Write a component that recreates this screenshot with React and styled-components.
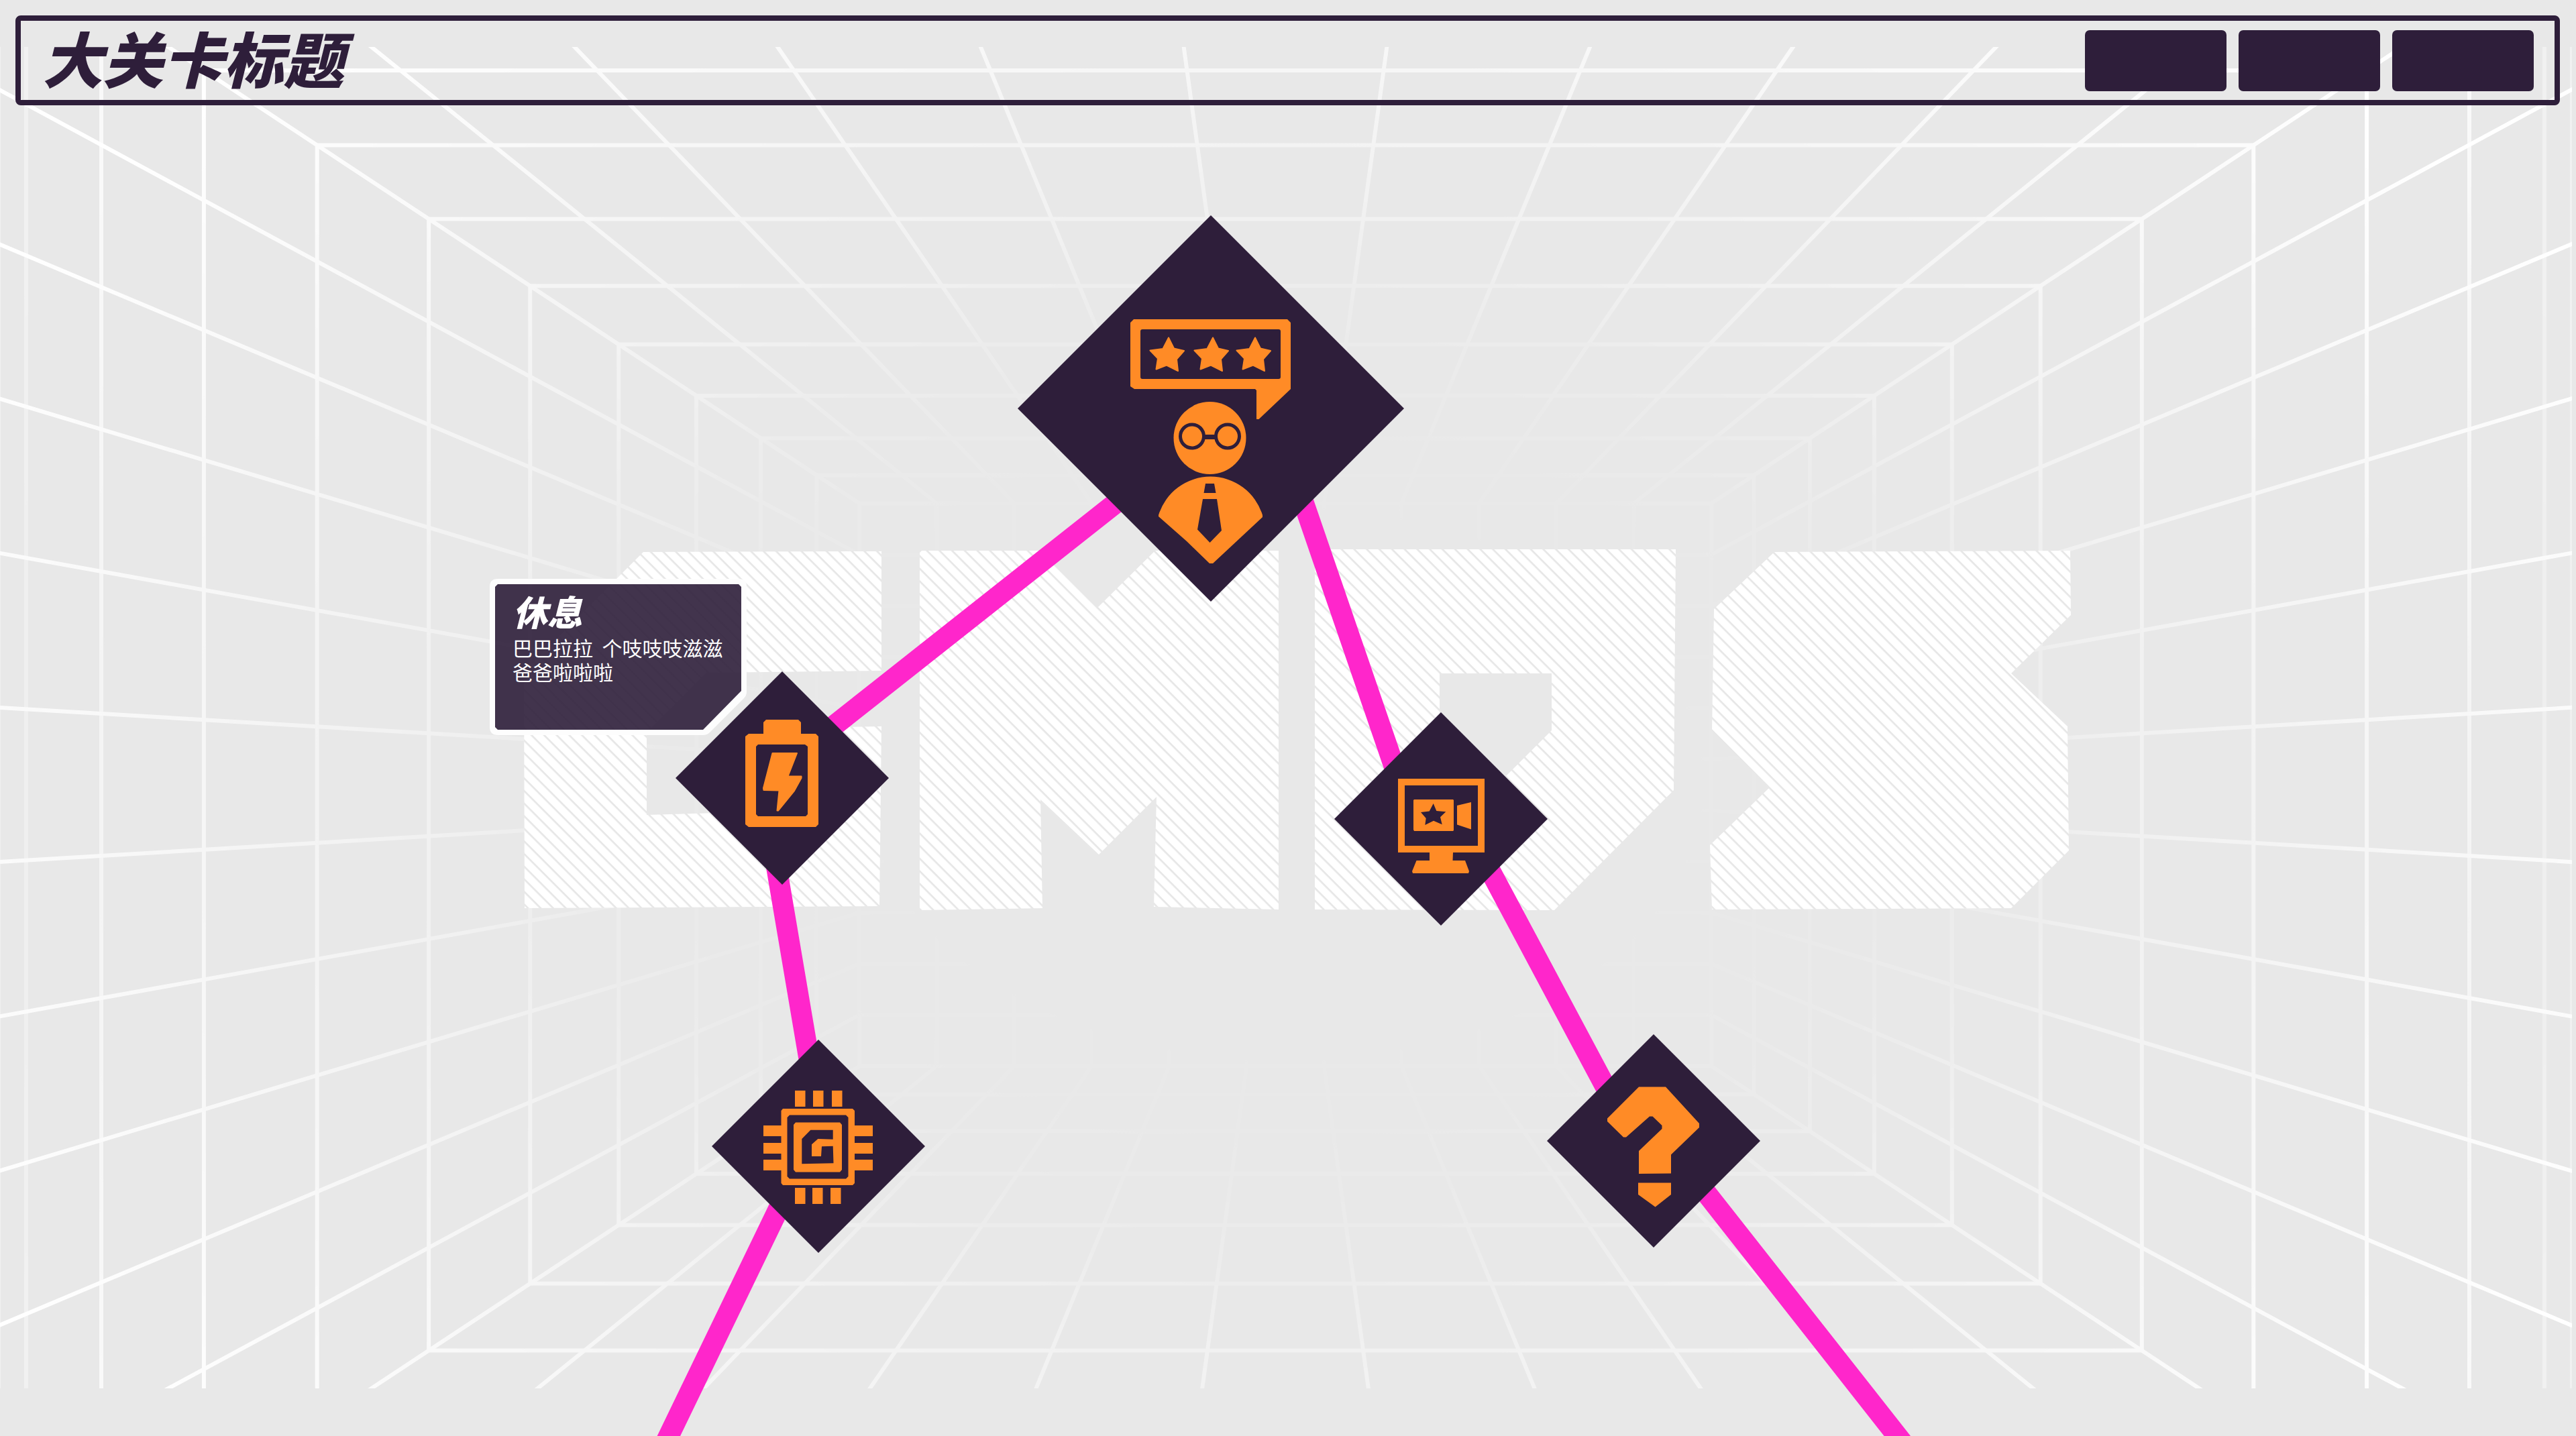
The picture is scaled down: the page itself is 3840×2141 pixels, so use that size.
import React from 'react';
import styled, { createGlobalStyle } from 'styled-components';

const INK = '#2e1e3a';
const ORANGE = '#ff8b26';
const PINK = '#ff26cb';
const PAPER = '#e8e8e8';

const GlobalStyle = createGlobalStyle`
  *, *::before, *::after { box-sizing: border-box; }
  body {
    margin: 0;
    background: ${PAPER};
    font-family: "Noto Sans CJK SC", "Noto Sans", sans-serif;
  }
`;

const Page = styled.div`
  position: relative;
  min-height: 100vh;
  overflow: hidden;
  background: ${PAPER};
  color: ${INK};
`;

const Header = styled.header`
  position: relative;
  z-index: 1;
  display: flex;
  align-items: center;
  justify-content: space-between;
  height: 134px;
  margin: 23px 24px 0 23px;
  padding: 0 31px 0 32px;
  border: 8px solid ${INK};
  border-radius: 8px;
`;

const Title = styled.h1`
  margin: 0 0 10px;
  font-size: 90px;
  line-height: 108px;
  font-weight: 900;
  font-style: italic;
  white-space: nowrap;
`;

const Actions = styled.nav`
  display: flex;
  gap: 18px;
`;

const ActionButton = styled.button`
  width: 211px;
  height: 91px;
  padding: 0;
  border: 0;
  border-radius: 7px;
  background: ${INK};
  cursor: pointer;
`;

const Map = styled.main`
  position: absolute;
  inset: 0;
`;

const Layer = styled.svg`
  position: absolute;
  top: 0;
  left: 0;
  width: 3840px;
  height: 2200px;
`;

const NodeButton = styled.button`
  position: absolute;
  left: ${(p) => p.$x}px;
  top: ${(p) => p.$y}px;
  width: ${(p) => p.$size}px;
  height: ${(p) => p.$size}px;
  padding: 0;
  border: 0;
  background: ${INK};
  color: ${ORANGE};
  clip-path: polygon(50% 0, 100% 50%, 50% 100%, 0 50%);
  cursor: pointer;

  svg {
    display: block;
    width: 100%;
    height: 100%;
  }
`;

const Card = styled.aside`
  position: absolute;
  left: 730px;
  top: 863px;
  width: 383px;
  height: 233px;
  padding: 18px 26px 24px 34px;
  color: #fff;
`;

const CardShape = styled.svg`
  position: absolute;
  inset: 0;
  width: 100%;
  height: 100%;
`;

const CardTitle = styled.h2`
  position: relative;
  margin: 0 0 6px;
  font-size: 52px;
  line-height: 60px;
  font-weight: 900;
  font-style: italic;
`;

const CardText = styled.p`
  position: relative;
  margin: 0;
  font-size: 30px;
  line-height: 36px;
  white-space: pre-wrap;
`;

/* The room: an 11 x 11 grid on every wall, seen from the centre. */
const CX = 1916;
const CY = 1170;
const RATIO = 1.5137;
const BACK = 419.5;
const FRAMES = [461.5, 516.5, 580, 656.5, 743.7, 843.5, 953.5, 1065, 1166, 1240, 1267];
const ODDS = [-11, -9, -7, -5, -3, -1, 1, 3, 5, 7, 9, 11];

function Room() {
  const bw = BACK * RATIO;
  const far = 4;
  return (
    <g clipPath="url(#room-clip)">
      <g mask="url(#room-mask)" stroke="#fff" strokeWidth="6" fill="none">
        {[BACK, ...FRAMES].map((h) => (
          <rect
            key={h}
            x={CX - h * RATIO}
            y={CY - h}
            width={h * RATIO * 2}
            height={h * 2}
            strokeOpacity={h > 1200 ? 0.4 : h > 1100 ? 0.75 : 1}
          />
        ))}
        {ODDS.map((k) => {
          const dx = (bw * k) / 11;
          const dy = (BACK * k) / 11;
          const side = Math.abs(k) < 11;
          return (
            <g key={k}>
              <path d={`M${CX + dx} ${CY - BACK}L${CX + dx * far} ${CY - BACK * far}`} />
              <path d={`M${CX + dx} ${CY + BACK}L${CX + dx * far} ${CY + BACK * far}`} />
              {side && <path d={`M${CX - bw} ${CY + dy}L${CX - bw * far} ${CY + dy * far}`} />}
              {side && <path d={`M${CX + bw} ${CY + dy}L${CX + bw * far} ${CY + dy * far}`} />}
              {side && <path d={`M${CX + dx} ${CY - BACK}V${CY + BACK}`} />}
              {side && <path d={`M${CX - bw} ${CY + dy}H${CX + bw}`} />}
            </g>
          );
        })}
      </g>
    </g>
  );
}

const LETTERS = [
  'M959 823L1314 822V1000L1053 1003L964 1092V1215L1140 1210V1086L1314 1083L1311 1351L782 1354L781 1001Z',
  'M1374 821H1551L1636 906L1722 821H1906V1356L1720 1352L1724 1188L1638 1274L1551 1192L1554 1354L1371 1357V824Z',
  'M1960 819H2498L2495 1178L2317 1357L1960 1356ZM2146 1004V1202H2200L2313 1089V1004Z',
  'M2645 823L3086 821L3087 917L2998 1004L3082 1083L3084 1268L2998 1354L2552 1356L2549 1260L2638 1174L2552 1090L2555 908Z',
];

function Backdrop() {
  return (
    <Layer viewBox="0 0 3840 2200" aria-hidden="true">
      <defs>
        <clipPath id="room-clip">
          <rect x="0" y="70" width="3834" height="2000" />
        </clipPath>
        <radialGradient
          id="room-fade"
          gradientUnits="userSpaceOnUse"
          cx="0"
          cy="0"
          r="1500"
          gradientTransform={`translate(${CX} ${CY}) scale(${RATIO} 1)`}
        >
          <stop offset="0.24" stopColor="#000" />
          <stop offset="0.28" stopColor="#0c0c0c" />
          <stop offset="0.4" stopColor="#1a1a1a" />
          <stop offset="0.48" stopColor="#343434" />
          <stop offset="0.56" stopColor="#626262" />
          <stop offset="0.82" stopColor="#c4c4c4" />
          <stop offset="1" stopColor="#fff" />
        </radialGradient>
        <mask id="room-mask" maskUnits="userSpaceOnUse" x="0" y="0" width="3840" height="2200" style={{ maskType: 'luminance' }}>
          <rect width="3840" height="2200" fill="url(#room-fade)" />
        </mask>
        <pattern
          id="hatch"
          width="13.29"
          height="13.29"
          patternUnits="userSpaceOnUse"
          patternTransform="rotate(-45)"
        >
          <rect width="14" height="14" fill="#fff" />
          <rect x="9.8" width="2.6" height="14" fill="#e6e6e6" />
        </pattern>
      </defs>
      <Room />
      {LETTERS.map((d) => (
        <path key={d} d={d} fill="url(#hatch)" fillRule="evenodd" />
      ))}
    </Layer>
  );
}

const ROUTES = [
  'M1700 721L1180 1132',
  'M1940 740L2091 1180',
  'M1152 1260L1213 1620',
  'M2201 1260L2409 1650',
  'M1181 1760L978 2180',
  'M2513 1740L2859 2180',
];

function Routes() {
  return (
    <Layer viewBox="0 0 3840 2200" aria-hidden="true">
      {ROUTES.map((d) => (
        <path key={d} d={d} stroke={PINK} strokeWidth="31" />
      ))}
    </Layer>
  );
}

const STAR =
  'M225 182.5L233 198.5L248 202L237 214.5L239 232L222 223.5L206.5 229.5L209 213.5L197.5 201.5L216.5 199Z';

function BossIcon() {
  return (
    <svg viewBox="0 0 576 576" fill="currentColor" aria-hidden="true">
      <path
        fillRule="evenodd"
        d="M173 155H402L407 160V259L359.500 304H356V261L354 259H174L168 255V160ZM186 170Q183 170 183 173V241Q183 244 186 244H389Q392 244 392 241V173Q392 170 389 170Z"
      />
      {[0, 66, 129].map((dx) => (
        <path
          key={dx}
          d={STAR}
          transform={`translate(${dx} 0)`}
          stroke="currentColor"
          strokeWidth="2"
          strokeLinejoin="round"
        />
      ))}
      <circle cx="286.500" cy="332" r="54" />
      <g fill="none" stroke={INK} strokeWidth="5">
        <circle cx="260" cy="329.500" r="17.500" />
        <circle cx="313" cy="329.500" r="17.500" />
        <path d="M278 330.500H295" strokeWidth="7" />
      </g>
      <path d="M210 447A81 81 0 0 1 365 447V450L291 519H286L252 486L210 449Z" />
      <path fill={INK} d="M280 400H293L295.500 414H277.500ZM276 423H297L304 470L286.500 488L268 468.500Z" />
    </svg>
  );
}

function BatteryIcon() {
  return (
    <svg viewBox="0 0 318 318" fill="currentColor" aria-hidden="true">
      <path
        fillRule="evenodd"
        d="M135 72H183L187 76V93H209L213 97V228L209 232H109L104 228V97L109 93H131V76ZM123 109L120 112V213L123 216H194L197 213V112L193 109Z"
      />
      <path
        d="M144.500 122H181L167.500 156.500H187.500V159L177 178L153 207.500H151.500L154.500 177.500L131.500 177L131 174Z"
        stroke="currentColor"
        strokeWidth="2"
        strokeLinejoin="round"
      />
    </svg>
  );
}

function MonitorIcon() {
  return (
    <svg viewBox="0 0 318 318" fill="currentColor" aria-hidden="true">
      <path fillRule="evenodd" d="M95 99H224V209H177L176.500 221H195L201 237L200 240H117L116 237L122.500 221H142V209H95ZM105 109V199H214V109Z" />
      <path
        fillRule="evenodd"
        d="M119 130H177L178 131V176L177 177H119L118 175V131ZM147.700 136L141.700 147.500L129 149L136.700 158L135.300 168L148 161.700L160.700 167.300L158 156.300L166.300 148.300L152.300 147Z"
      />
      <path d="M183 139L204 134V174.500L183 167.500Z" />
    </svg>
  );
}

function ChipIcon() {
  return (
    <svg viewBox="0 0 318 318" fill="currentColor" aria-hidden="true">
      {[124, 151, 179].map((x) => (
        <rect key={x} x={x} y="76" width="15.500" height="24" />
      ))}
      {[124, 150, 177].map((x) => (
        <rect key={x} x={x} y="221" width="15.500" height="24" />
      ))}
      {[128, 154, 179].map((y) => (
        <path key={y} d={`M77 ${y}H104V${y + 16}H77ZM212 ${y}H240V${y + 16}H212Z`} />
      ))}
      <path
        fillRule="evenodd"
        d="M106 103H210L213 106V214L210 217H106L103.500 214V106ZM116 112.500L112.500 116V204L116 207.500H200L203.500 204V116L200 112.500Z"
      />
      <path
        fillRule="evenodd"
        d="M125 123.500H191L194 127V194L191 197.500H125L122 194V127ZM147.300 134.700L134.300 148V185.300L181.500 184.300L180.700 158.700L164 159.300L163 174H149V156.300L158.300 148L180.700 148.700V134.700Z"
      />
    </svg>
  );
}

function QuestionIcon() {
  return (
    <svg viewBox="0 0 318 318" fill="currentColor" aria-hidden="true">
      <path d="M137 78.500H177L227 133V139L185 179.500V207.500L137 208V174L171.500 141V136L157.500 122.500H153L118 153.500H114L90 130V125.500Z" />
      <path d="M136 221.500H185V239L161.500 257.500L136 239Z" />
    </svg>
  );
}

const NODES = [
  { name: '首领', x: 1517, y: 321, size: 576, Icon: BossIcon },
  { name: '休息', x: 1007, y: 1001, size: 318, Icon: BatteryIcon },
  { name: '录像', x: 1989, y: 1062, size: 318, Icon: MonitorIcon },
  { name: '芯片', x: 1061, y: 1550, size: 318, Icon: ChipIcon },
  { name: '未知', x: 2306, y: 1542, size: 318, Icon: QuestionIcon },
];

export default function App() {
  return (
    <Page>
      <GlobalStyle />
      <Map>
        <Backdrop />
        <Routes />
        <Card>
          <CardShape viewBox="0 0 383 233" aria-hidden="true">
            <path
              fill="#fdfdfd"
              fillRule="evenodd"
              d="M12 0H371Q383 0 383 12V168Q383 174 379 178L328 229Q324 233 318 233H12Q0 233 0 221V12Q0 0 12 0ZM12 8L8 12V221L12 225H318L375 167V12L371 8Z"
            />
            <path fill={INK} fillOpacity="0.9" d="M12 8L8 12V221L12 225H318L375 167V12L371 8Z" />
          </CardShape>
          <CardTitle>休息</CardTitle>
          <CardText>{'巴巴拉拉  个吱吱吱滋滋爸爸啦啦啦'}</CardText>
        </Card>
        {NODES.map(({ name, x, y, size, Icon }) => (
          <NodeButton key={name} type="button" aria-label={name} $x={x} $y={y} $size={size}>
            <Icon />
          </NodeButton>
        ))}
      </Map>
      <Header>
        <Title>大关卡标题</Title>
        <Actions aria-label="操作">
          <ActionButton type="button" aria-label="操作一" />
          <ActionButton type="button" aria-label="操作二" />
          <ActionButton type="button" aria-label="操作三" />
        </Actions>
      </Header>
    </Page>
  );
}
